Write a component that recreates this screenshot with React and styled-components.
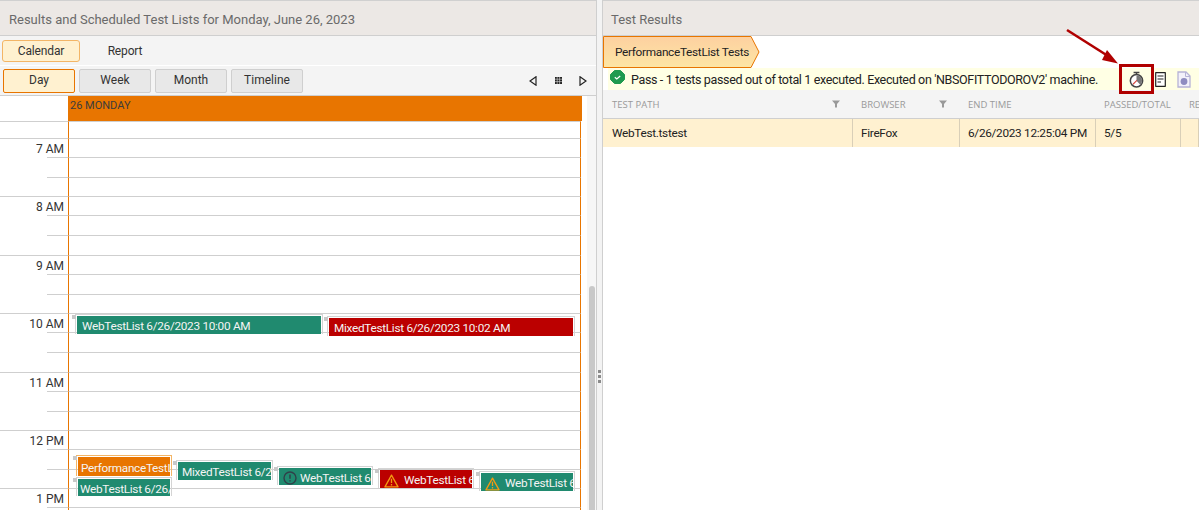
import React from "react";
import styled, { createGlobalStyle } from "styled-components";

const Global = createGlobalStyle`
  html, body { margin: 0; padding: 0; background: #fff; overflow: hidden; }
  body { font-family: Roboto, "Open Sans", sans-serif; font-size: 12px; color: #222; }
  * { box-sizing: border-box; }
`;

const Page = styled.div`
  width: 1199px;
  height: 510px;
  display: flex;
  overflow: hidden;
  background: #fff;
  position: relative;
`;

const LeftPanel = styled.div`
  width: 597px;
  flex: none;
  display: flex;
  flex-direction: column;
  border-right: 1px solid #cfcfcf;
  height: 510px;
`;

const Splitter = styled.div`
  width: 5px;
  flex: none;
  background: #f3f3f3;
  display: flex;
  flex-direction: column;
  align-items: center;
  justify-content: flex-start;
  gap: 2px;
  padding-top: 370px;
`;

const Grip = styled.span`
  width: 3px;
  height: 3px;
  background: #8a8a8a;
`;

const RightPanel = styled.div`
  flex: 1;
  display: flex;
  flex-direction: column;
  border-left: 1px solid #cfcfcf;
  min-width: 0;
`;

const PanelTitle = styled.div`
  height: 36px;
  flex: none;
  background: #ece8e5;
  border-top: 1px solid #d0d0d0;
  border-bottom: 1px solid #cfcfcf;
  padding: 2px ${(p) => p.$pad}px 0;
  display: flex;
  align-items: center;
  font-size: 13px;
  color: #6a6a6a;
`;

const TabBar = styled.div`
  height: 29px;
  flex: none;
  background: #f4f4f4;
  display: flex;
  align-items: center;
  padding-left: 2px;
  gap: 2px;
`;

const Tab = styled.div`
  width: ${(p) => (p.$active ? "78px" : "86px")};
  height: 22px;
  display: flex;
  align-items: center;
  justify-content: center;
  border-radius: 3px;
  font-size: 12px;
  letter-spacing: -0.15px;
  color: #333;
  background: ${(p) => (p.$active ? "#fff1d0" : "transparent")};
  border: 1px solid ${(p) => (p.$active ? "#f3b566" : "transparent")};
`;

const ViewBar = styled.div`
  height: 31px;
  flex: none;
  background: #f4f4f4;
  border-top: 1px solid #fff;
  border-bottom: 1px solid #cfcfcf;
  display: flex;
  align-items: center;
  padding: 0 3px;
  gap: 4px;
`;

const ViewButton = styled.div`
  width: 72px;
  height: 24px;
  display: flex;
  align-items: center;
  justify-content: center;
  border-radius: 2px;
  font-size: 12px;
  color: #333;
  padding-bottom: 1px;
  background: ${(p) => (p.$active ? "#fff1d0" : "#e8e8e8")};
  border: 1px solid ${(p) => (p.$active ? "#e87500" : "#cfcfcf")};
`;

const Pager = styled.div`
  margin-left: auto;
  margin-right: 6px;
  width: 58px;
  display: flex;
  align-items: center;
  justify-content: space-between;
`;

const CalendarArea = styled.div`
  flex: 1;
  display: flex;
  min-height: 0;
  overflow: hidden;
`;

const CalendarMain = styled.div`
  width: 587px;
  flex: none;
`;

const DayHeader = styled.div`
  height: 25px;
  display: flex;
`;

const Corner = styled.div`
  width: 68px;
  flex: none;
`;

const DayLabel = styled.div`
  width: 514px;
  background: #e87500;
  font-size: 11px;
  color: #3c3c3c;
  padding: 2px 2px;
  line-height: 15px;
`;

const Schedule = styled.div`
  position: relative;
`;

const Slot = styled.div`
  height: ${(p) => p.$h}px;
  display: flex;
`;

const TimeCell = styled.div`
  width: 68px;
  flex: none;
  position: relative;
  text-align: right;
  padding: 2px 4px 0 0;
  font-size: 12px;
  color: #333;
  line-height: 18px;
  &::before {
    content: "";
    position: absolute;
    left: ${(p) => (p.$major ? "0" : "47px")};
    right: 0;
    top: 0;
    border-top: 1px solid #cfcfcf;
  }
`;

const DayCell = styled.div`
  width: 513px;
  flex: none;
  border-top: 1px solid #cfcfcf;
  border-left: 1px solid #e87500;
  border-right: 1px solid #e87500;
`;

const Event = styled.div`
  position: absolute;
  left: ${(p) => p.$x}px;
  top: ${(p) => p.$y}px;
  width: ${(p) => p.$w}px;
  height: ${(p) => p.$h}px;
  border: 1px solid ${(p) => p.$frame || "#d4d4d4"};
  border-bottom: 0;
  padding: 1px 1px 0;
  &::before {
    content: "";
    position: absolute;
    left: -4px;
    top: 0;
    width: 4px;
    height: 4px;
    background: #c8c8c8;
  }
`;

const EventBody = styled.div`
  height: 100%;
  background: ${(p) => p.$color};
  color: #f4f4f4;
  font-size: 11.8px;
  letter-spacing: -0.3px;
  line-height: 17px;
  padding: 3px 0 0 ${(p) => p.$pad}px;
  white-space: nowrap;
  overflow: hidden;
  display: flex;
  align-items: center;
  gap: ${(p) => p.$gap}px;
`;

const Scrollbar = styled.div`
  width: 9px;
  flex: none;
  background: #f6f6f6;
  padding-top: 190px;
  display: flex;
  justify-content: center;
`;

const Thumb = styled.div`
  width: 6px;
  height: 240px;
  background: #c8c8c8;
  border-radius: 3px 3px 0 0;
`;

const Breadcrumb = styled.div`
  height: 32px;
  flex: none;
  display: flex;
  align-items: flex-start;
  position: relative;
`;

const CrumbShape = styled.svg`
  position: absolute;
  left: 0;
  top: 0;
`;

const CrumbText = styled.span`
  position: relative;
  margin: 9px 0 0 12px;
  font-size: 11.8px;
  letter-spacing: -0.3px;
  color: #222;
`;

const StatusBar = styled.div`
  height: 22px;
  flex: none;
  background: #ffffe4;
  margin-left: 5px;
  display: flex;
  align-items: center;
  font-size: 12.5px;
  letter-spacing: -0.35px;
  color: #222;
  position: relative;
`;

const StatusText = styled.span`
  margin-left: 6px;
`;

const StatusIcons = styled.div`
  position: absolute;
  left: 511px;
  top: -4px;
  width: 35px;
  height: 30px;
  border: 3px solid #b00000;
  display: flex;
  align-items: center;
  justify-content: center;
  padding-right: 1px;
`;

const SideIcon = styled.svg`
  position: absolute;
  top: ${(p) => p.$top}px;
  left: ${(p) => p.$left}px;
`;

const GridHead = styled.div`
  height: 29px;
  flex: none;
  display: flex;
  background: #f4f4f4;
  border-bottom: 1px solid #cfcfcf;
`;

const HeadCell = styled.div`
  width: ${(p) => p.$w}px;
  flex: none;
  padding: 0 13px 0 8px;
  display: flex;
  align-items: center;
  justify-content: space-between;
  font-family: "Open Sans", sans-serif;
  font-size: 9.5px;
  color: #9a9a9a;
  white-space: nowrap;
  overflow: hidden;
  &:first-child {
    padding-left: 9px;
  }
`;

const Row = styled.div`
  height: 28px;
  flex: none;
  display: flex;
  background: #fff1d0;
`;

const Cell = styled.div`
  width: ${(p) => p.$w}px;
  flex: none;
  padding-left: 8px;
  display: flex;
  align-items: center;
  font-size: 11.8px;
  letter-spacing: -0.3px;
  color: #222;
  border-right: 1px solid #d9cfb8;
  white-space: nowrap;
  &:first-child {
    padding-left: 9px;
  }
`;

const Arrow = styled.svg`
  position: absolute;
  left: 1060px;
  top: 24px;
`;

const FilterIcon = () => (
  <svg width="8" height="8" viewBox="0 0 8 8">
    <path d="M0 0.5h8L5 4v3.5H3V4Z" fill="#999" />
  </svg>
);

const columns = [
  { title: "TEST PATH", w: 250, filter: true },
  { title: "BROWSER", w: 107, filter: true },
  { title: "END TIME", w: 136 },
  { title: "PASSED/TOTAL", w: 85 },
  { title: "RE", w: 18 },
];

const hours = ["7 AM", "8 AM", "9 AM", "10 AM", "11 AM", "12 PM", "1 PM"];

// one hour is three rows, 58.4px in all
const slots = [{ h: 17, major: true }];
hours.forEach((label) => {
  slots.push({ h: 19, major: true, label });
  slots.push({ h: 20, major: false });
  slots.push({ h: 19.4, major: false });
});

const GREEN = "#208a6f";
const RED = "#bb0000";
const ORANGE = "#e87500";

const InfoMark = () => (
  <svg width="14" height="14" viewBox="0 0 14 14" style={{ flex: "none" }}>
    <circle cx="7" cy="7" r="6" fill="none" stroke="#30404a" strokeWidth="1.4" />
    <path d="M7 3.5v4.2M7 9.2v1.4" stroke="#30404a" strokeWidth="1.5" />
  </svg>
);

const WarnMark = () => (
  <svg width="15" height="14" viewBox="0 0 16 15" style={{ flex: "none" }}>
    <path d="M8 1.2L15 13.8H1Z" fill="none" stroke="#f29a12" strokeWidth="1.4" strokeLinejoin="round" />
    <path d="M8 5v4.6M8 10.8v1.4" stroke="#f29a12" strokeWidth="1.4" />
  </svg>
);

const events = [
  { x: 75, y: 193, w: 248, h: 20, color: GREEN, pad: 5, text: "WebTestList 6/26/2023 10:00 AM" },
  { x: 327, y: 195, w: 248, h: 20, color: RED, pad: 5, text: "MixedTestList 6/26/2023 10:02 AM" },
  { x: 76, y: 334, w: 96, h: 21, color: ORANGE, frame: "#f3b566", pad: 3, text: "PerformanceTestList" },
  { x: 76, y: 356, w: 96, h: 19, color: GREEN, pad: 2, text: "WebTestList 6/26/2023" },
  { x: 176, y: 339, w: 97, h: 20, color: GREEN, pad: 4, text: "MixedTestList 6/26/2023" },
  { x: 277, y: 345, w: 96, h: 19, color: GREEN, pad: 4, gap: 3, icon: <InfoMark />, text: "WebTestList 6/26/2023" },
  { x: 378, y: 347, w: 96, h: 20, color: RED, pad: 4, gap: 5, icon: <WarnMark />, text: "WebTestList 6/26/2023" },
  { x: 479, y: 350, w: 96, h: 20, color: GREEN, pad: 4, gap: 5, icon: <WarnMark />, text: "WebTestList 6/26/2023" },
];

export default function App() {
  return (
    <Page>
      <Global />
      <LeftPanel>
        <PanelTitle $pad={9}>Results and Scheduled Test Lists for Monday, June 26, 2023</PanelTitle>
        <TabBar>
          <Tab $active>Calendar</Tab>
          <Tab>Report</Tab>
        </TabBar>
        <ViewBar>
          <ViewButton $active>Day</ViewButton>
          <ViewButton>Week</ViewButton>
          <ViewButton>Month</ViewButton>
          <ViewButton>Timeline</ViewButton>
          <Pager>
            <svg width="8" height="10" viewBox="0 0 8 10">
              <path d="M7 0.8L1 5L7 9.2Z" fill="none" stroke="#222" strokeWidth="1.2" />
            </svg>
            <svg width="7" height="7" viewBox="0 0 7 7">
              <path d="M0 0h7v7H0Z" fill="#222" />
              <path d="M2.2 0v7M4.6 0v7M0 2.2h7M0 4.6h7" stroke="#ddd" strokeWidth="0.6" />
            </svg>
            <svg width="8" height="10" viewBox="0 0 8 10">
              <path d="M1 0.8L7 5L1 9.2Z" fill="none" stroke="#222" strokeWidth="1.2" />
            </svg>
          </Pager>
        </ViewBar>
        <CalendarArea>
          <CalendarMain>
            <DayHeader>
              <Corner />
              <DayLabel>26 MONDAY</DayLabel>
            </DayHeader>
            <Schedule>
              {slots.map((s, i) => (
                <Slot key={i} $h={s.h}>
                  <TimeCell $major={s.major}>{s.label}</TimeCell>
                  <DayCell />
                </Slot>
              ))}
              {events.map((e, i) => (
                <Event key={i} $x={e.x} $y={e.y} $w={e.w} $h={e.h} $frame={e.frame}>
                  <EventBody $color={e.color} $pad={e.pad} $gap={e.gap}>
                    {e.icon}
                    {e.text}
                  </EventBody>
                </Event>
              ))}
            </Schedule>
          </CalendarMain>
          <Scrollbar>
            <Thumb />
          </Scrollbar>
        </CalendarArea>
      </LeftPanel>
      <Splitter>
        <Grip />
        <Grip />
        <Grip />
      </Splitter>
      <RightPanel>
        <PanelTitle $pad={8}>Test Results</PanelTitle>
        <Breadcrumb>
          <CrumbShape width="160" height="33" viewBox="0 0 160 33">
            <defs>
              <linearGradient id="crumb" x1="0" y1="0" x2="0" y2="1">
                <stop offset="0" stopColor="#fdd0a0" />
                <stop offset="1" stopColor="#fde6a4" />
              </linearGradient>
            </defs>
            <path d="M0.5 0.5H148L156 16L148 31.5H0.5Z" fill="url(#crumb)" stroke="#e87500" />
          </CrumbShape>
          <CrumbText>PerformanceTestList Tests</CrumbText>
        </Breadcrumb>
        <StatusBar>
          <svg width="15" height="15" viewBox="0 0 15 15" style={{ marginLeft: 2, marginTop: -4 }}>
            <path d="M4.5 0.5h6l4 4v5l-4 4h-6l-4-4v-5Z" fill="#1f9a4f" stroke="#1f9a4f" strokeLinejoin="round" />
            <path d="M4.8 7.2l2 1.8 3.4-3" fill="none" stroke="#fff" strokeWidth="1.2" />
          </svg>
          <StatusText>Pass - 1 tests passed out of total 1 executed. Executed on 'NBSOFITTODOROV2' machine.</StatusText>
          <StatusIcons>
            <svg width="15" height="17" viewBox="0 0 18 20">
              <path d="M5.5 1.5h7M9 1.5v3" stroke="#444" strokeWidth="1.8" />
              <circle cx="9" cy="11.5" r="7.4" fill="#fff" stroke="#444" strokeWidth="1.8" />
              <path d="M9 11.5V4.8A6.7 6.7 0 0 1 15.7 11.5A6.7 6.7 0 0 1 13.5 16.4Z" fill="#777" />
              <path d="M9.5 11L4.8 15.7" stroke="#d8453a" strokeWidth="1.3" />
            </svg>
          </StatusIcons>
          <SideIcon $left={547} $top={4} width="11" height="15" viewBox="0 0 11 15">
            <path d="M0.7 0.7h9.6v13.6H0.7Z" fill="#fff" stroke="#222" strokeWidth="1.2" strokeLinejoin="round" />
            <path d="M2.5 4h6M2.5 7h6M2.5 10h3.5" stroke="#222" strokeWidth="1.2" />
          </SideIcon>
          <SideIcon $left={569} $top={3} width="14" height="17" viewBox="0 0 14 17">
            <path d="M1 1h8l4 4v11H1Z" fill="#f3f1fa" stroke="#b6b3d6" strokeWidth="1.3" />
            <path d="M8.5 1v4.5H13" fill="none" stroke="#b6b3d6" strokeWidth="1" />
            <circle cx="7" cy="10.5" r="3.4" fill="#8f8cc0" />
          </SideIcon>
        </StatusBar>
        <GridHead>
          {columns.map((c) => (
            <HeadCell key={c.title} $w={c.w}>
              {c.title}
              {c.filter && <FilterIcon />}
            </HeadCell>
          ))}
        </GridHead>
        <Row>
          <Cell $w={250}>WebTest.tstest</Cell>
          <Cell $w={107}>FireFox</Cell>
          <Cell $w={136}>6/26/2023 12:25:04 PM</Cell>
          <Cell $w={85}>5/5</Cell>
          <Cell $w={18} />
        </Row>
      </RightPanel>
      <Arrow width="70" height="50" viewBox="0 0 70 50">
        <path d="M7 6L48 32" stroke="#b00000" strokeWidth="2.6" />
        <path d="M58 39.5L47 26L42 36Z" fill="#b00000" />
      </Arrow>
    </Page>
  );
}
